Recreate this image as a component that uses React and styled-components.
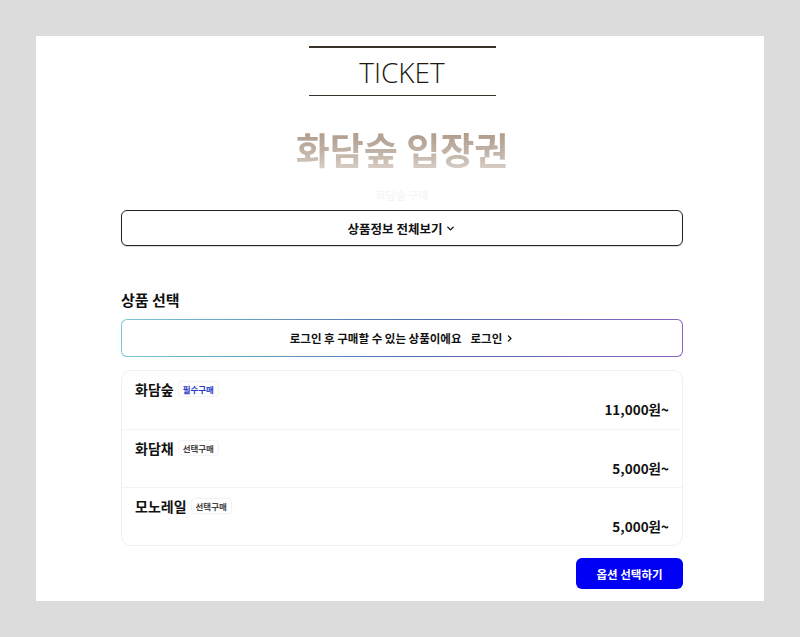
import React from "react";
import styled, { createGlobalStyle } from "styled-components";

const Global = createGlobalStyle`
  html, body { margin: 0; padding: 0; background: #dcdcdc; }
  body { font-family: "Noto Sans CJK KR", "Noto Sans", sans-serif; color: #111; }
`;

const Page = styled.div`
  padding: 36px 36px;
  display: flex;
  justify-content: center;
`;

const Panel = styled.main`
  width: 728px;
  height: 565px;
  background: #fff;
  box-sizing: border-box;
  padding: 10px 81px 0 85px;
  display: flex;
  flex-direction: column;
  align-items: stretch;
`;

const TicketBox = styled.div`
  align-self: center;
  width: 187px;
  height: 50px;
  border-top: 2px solid #3a332a;
  border-bottom: 1.5px solid #3a332a;
  box-sizing: border-box;
  display: flex;
  align-items: center;
  justify-content: center;
  font-family: "Open Sans", "Noto Sans", sans-serif;
  font-weight: 300;
  font-size: 28px;
  color: #21180f;
`;

const Title = styled.h1`
  margin: 31px 0 0;
  text-align: center;
  font-size: 37px;
  line-height: 44px;
  font-weight: 700;
  background: linear-gradient(180deg, #a99584 0%, #c2b5a9 60%, #dad1c9 100%);
  -webkit-background-clip: text;
  background-clip: text;
  color: transparent;
`;

const Sub = styled.div`
  margin-top: 17px;
  text-align: center;
  font-size: 11px;
  line-height: 14px;
  color: #f3f3f3;
`;

const DetailButton = styled.button`
  margin-top: 8px;
  height: 36px;
  border: 1px solid #222;
  border-radius: 6px;
  background: #fff;
  font-family: inherit;
  font-size: 12.5px;
  font-weight: 700;
  color: #111;
  display: flex;
  align-items: center;
  justify-content: center;
  gap: 3px;
  box-shadow: 0 1px 1px rgba(0,0,0,0.15);
`;

const SectionTitle = styled.h2`
  margin: 44px 0 0;
  font-size: 15px;
  line-height: 20px;
  font-weight: 700;
  color: #111;
`;

const LoginBox = styled.div`
  margin-top: 9px;
  height: 38px;
  box-sizing: border-box;
  border: 1px solid transparent;
  border-radius: 6px;
  background:
    linear-gradient(#fff, #fff) padding-box,
    linear-gradient(90deg, #7cc6d2 0%, #4d6bb0 55%, #8a62c2 100%) border-box;
  display: flex;
  align-items: center;
  justify-content: center;
  font-size: 11.5px;
  font-weight: 700;
  color: #111;
  gap: 9px;
`;

const LoginLink = styled.span`
  display: inline-flex;
  align-items: center;
  gap: 3px;
`;

const List = styled.div`
  margin-top: 13px;
  border: 1px solid #f0f0f0;
  border-radius: 10px;
  display: flex;
  flex-direction: column;
`;

const Row = styled.div`
  height: 58px;
  box-sizing: border-box;
  padding: 9px 13px 0 13px;
  display: flex;
  flex-direction: column;
  & + & { border-top: 1px solid #f3f3f3; }
`;

const NameLine = styled.div`
  display: flex;
  align-items: center;
  gap: 5px;
  height: 18px;
`;

const Name = styled.span`
  font-size: 14px;
  font-weight: 700;
  color: #111;
`;

const Badge = styled.span`
  font-size: 8.5px;
  font-weight: 700;
  padding: 1px 4px;
  border-radius: 3px;
  background: #fff;
  box-shadow: 0 0 2px rgba(0,0,0,0.18);
  color: ${p => (p.$required ? "#2a3cc8" : "#444")};
`;

const Price = styled.div`
  align-self: flex-end;
  margin-top: 1px;
  font-size: 13.5px;
  font-weight: 700;
  color: #111;
`;

const Footer = styled.div`
  margin-top: 12px;
  display: flex;
  justify-content: flex-end;
`;

const PrimaryButton = styled.button`
  width: 107px;
  height: 31px;
  border: none;
  border-radius: 6px;
  background: #0000f5;
  color: #fff;
  font-family: inherit;
  font-size: 11.5px;
  font-weight: 700;
`;

const items = [
  { name: "화담숲", badge: "필수구매", required: true, price: "11,000원~" },
  { name: "화담채", badge: "선택구매", required: false, price: "5,000원~" },
  { name: "모노레일", badge: "선택구매", required: false, price: "5,000원~" },
];

export default function App() {
  return (
    <>
      <Global />
      <Page>
        <Panel>
          <TicketBox>TICKET</TicketBox>
          <Title>화담숲 입장권</Title>
          <Sub>화담숲 구매</Sub>
          <DetailButton>
            상품정보 전체보기
            <svg width="11" height="11" viewBox="0 0 24 24" fill="none" stroke="#111" strokeWidth="3" strokeLinecap="round" strokeLinejoin="round">
              <path d="M6 9l6 6 6-6" />
            </svg>
          </DetailButton>
          <SectionTitle>상품 선택</SectionTitle>
          <LoginBox>
            <span>로그인 후 구매할 수 있는 상품이에요</span>
            <LoginLink>
              로그인
              <svg width="9" height="9" viewBox="0 0 24 24" fill="none" stroke="#111" strokeWidth="3.5" strokeLinecap="round" strokeLinejoin="round">
                <path d="M9 5l7 7-7 7" />
              </svg>
            </LoginLink>
          </LoginBox>
          <List>
            {items.map(it => (
              <Row key={it.name}>
                <NameLine>
                  <Name>{it.name}</Name>
                  <Badge $required={it.required}>{it.badge}</Badge>
                </NameLine>
                <Price>{it.price}</Price>
              </Row>
            ))}
          </List>
          <Footer>
            <PrimaryButton>옵션 선택하기</PrimaryButton>
          </Footer>
        </Panel>
      </Page>
    </>
  );
}
